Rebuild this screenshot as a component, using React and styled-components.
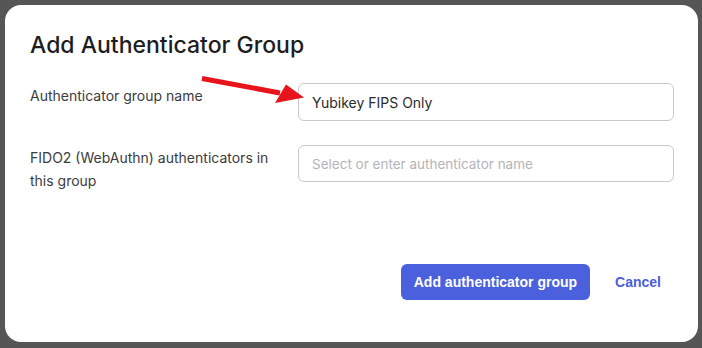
import React from 'react';
import styled, { createGlobalStyle } from 'styled-components';

const GlobalStyle = createGlobalStyle`
html, body {
    margin: 0;
    padding: 0;
    background: #565656;
}
`

const Backdrop = styled.div`
width: 702px;
height: 348px;
box-sizing: border-box;
padding: 5px 4px 6px 5px;
background: #565656;
position: relative;
overflow: hidden;
`

const Modal = styled.div`
height: 100%;
box-sizing: border-box;
background: #ffffff;
border-radius: 16px;
padding: 26px 24px 42px 25px;
display: flex;
flex-direction: column;
font-family: Inter, "Noto Sans", sans-serif;
`

const Title = styled.h2`
margin: 0 0 23px 0;
font-size: 23px;
line-height: 29px;
font-weight: 500;
color: #1d1d21;
`

const Form = styled.div`
display: flex;
flex-direction: column;
gap: 24px;
`

const Row = styled.div`
display: grid;
grid-template-columns: 248px 1fr;
column-gap: 20px;
align-items: start;
`

const Label = styled.label`
font-size: 14px;
line-height: 23px;
color: #3b3b40;
padding-top: 1px;
`

const Input = styled.input`
box-sizing: border-box;
width: 100%;
height: ${p => p.tall ? '38px' : '37px'};
border: 1px solid #c9c9cc;
border-radius: 6px;
padding: 0 13px;
font-family: Inter, "Noto Sans", sans-serif;
font-size: 14px;
color: #2a2a2e;
outline: none;
&::placeholder {
    color: #b4b4b8;
    font-size: 13.5px;
}
`

const Footer = styled.div`
margin-top: auto;
display: flex;
justify-content: flex-end;
align-items: center;
gap: 12px;
`

const Button = styled.button`
height: 36px;
border: none;
border-radius: 6px;
padding: 0 13px;
background: ${p => p.primary ? '#4b60dc' : 'transparent'};
color: ${p => p.primary ? '#ffffff' : '#4b60dc'};
font-family: "Liberation Sans", Arial, sans-serif;
font-weight: 700;
font-size: 14px;
cursor: pointer;
`

const Arrow = styled.svg`
position: absolute;
left: 0;
top: 0;
pointer-events: none;
`

export default function App() {
    return (
        <Backdrop>
            <GlobalStyle />
            <Modal>
                <Title>Add Authenticator Group</Title>
                <Form>
                    <Row>
                        <Label>Authenticator group name</Label>
                        <Input tall defaultValue="Yubikey FIPS Only" />
                    </Row>
                    <Row>
                        <Label>FIDO2 (WebAuthn) authenticators in this group</Label>
                        <Input placeholder="Select or enter authenticator name" />
                    </Row>
                </Form>
                <Footer>
                    <Button primary>Add authenticator group</Button>
                    <Button>Cancel</Button>
                </Footer>
            </Modal>
            <Arrow width="702" height="348">
                <line x1="202" y1="78.5" x2="280" y2="93" stroke="#e8141c" strokeWidth="5" />
                <polygon points="304,97.5 286,84.5 275,103" fill="#e8141c" />
            </Arrow>
        </Backdrop>
    );
}
